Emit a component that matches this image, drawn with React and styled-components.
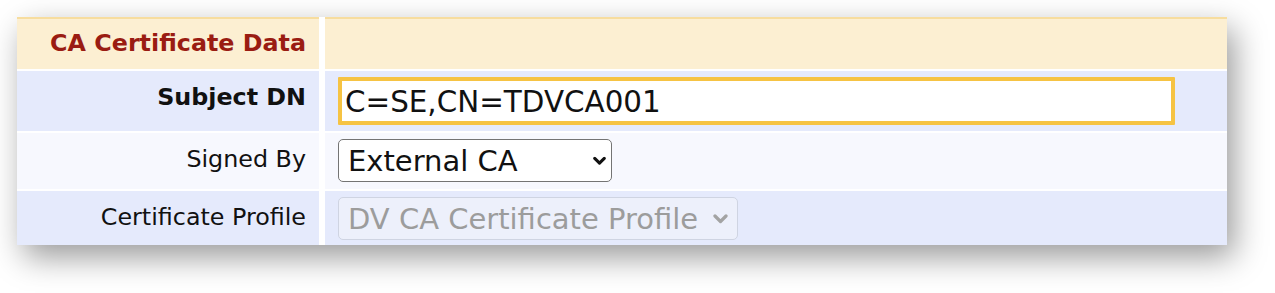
import React from "react";
import styled, { createGlobalStyle } from "styled-components";

const GlobalStyle = createGlobalStyle`
  html, body {
    margin: 0;
    padding: 0;
    background: #ffffff;
  }
  body {
    font-family: "DejaVu Sans", Verdana, sans-serif;
  }
`;

const Page = styled.div`
  padding: 17px 48px 48px 17px;
  width: 1275px;
  height: 293px;
  box-sizing: border-box;
`;

const Panel = styled.div`
  display: grid;
  grid-template-columns: 302px 1fr;
  grid-template-rows: 52px 60px 56px 54px;
  column-gap: 6px;
  row-gap: 2px;
  width: 1210px;
  background: #ffffff;
  box-shadow: 7px 12px 30px rgba(0, 0, 0, 0.4);
`;

const bgFor = (tone) =>
  tone === "head" ? "#fcefd2" : tone === "light" ? "#f7f8fe" : "#e5eafc";

const LabelCell = styled.div`
  background: ${(p) => bgFor(p.$tone)};
  border-top: ${(p) => (p.$tone === "head" ? "2px solid #f7dd9f" : "none")};
  text-align: right;
  padding: ${(p) => (p.$tone === "head" ? "10px" : "12px")} 13px 0 0;
  font-size: 23.8px;
  line-height: 28px;
  font-weight: ${(p) => (p.$strong ? 700 : 400)};
  color: ${(p) => (p.$tone === "head" ? "#9a1c12" : "#111111")};
  white-space: nowrap;
`;

const FieldCell = styled.div`
  background: ${(p) => bgFor(p.$tone)};
  border-top: ${(p) => (p.$tone === "head" ? "2px solid #f7dd9f" : "none")};
  padding: 6px 0 0 13px;
  display: flex;
  align-items: flex-start;
`;

const TextInput = styled.input`
  box-sizing: border-box;
  width: 837px;
  height: 48px;
  border: 4px solid #f6c343;
  border-radius: 1px;
  background: #ffffff;
  padding: 2px 0 0 3px;
  font-family: "DejaVu Sans", Verdana, sans-serif;
  font-size: 29.4px;
  color: #111111;
  outline: none;
`;

const SelectWrap = styled.div`
  position: relative;
  width: ${(p) => p.$width}px;
  height: 43px;
`;

const Select = styled.select`
  appearance: none;
  -webkit-appearance: none;
  box-sizing: border-box;
  width: 100%;
  height: 100%;
  margin: 0;
  border: 1px solid ${(p) => (p.disabled ? "#cfd4e2" : "#747474")};
  border-radius: 5px;
  background: ${(p) => (p.disabled ? "#edf0fb" : "#ffffff")};
  color: ${(p) => (p.disabled ? "#9c9c9c" : "#111111")};
  padding: 0 0 0 9px;
  font-family: "DejaVu Sans", Verdana, sans-serif;
  font-size: 29px;
  outline: none;
  opacity: 1;
`;

const Chevron = styled.svg`
  position: absolute;
  right: ${(p) => p.$right}px;
  top: 50%;
  transform: translateY(-50%);
  pointer-events: none;
`;

function Arrow({ right, color, w, h, sw }) {
  return (
    <Chevron $right={right} width={w} height={h} viewBox="0 0 12 8">
      <path
        d="M1.6 1.6 L6 6 L10.4 1.6"
        fill="none"
        stroke={color}
        strokeWidth={sw}
        strokeLinecap="round"
        strokeLinejoin="round"
      />
    </Chevron>
  );
}

export default function App() {
  return (
    <>
      <GlobalStyle />
      <Page>
        <Panel>
          <LabelCell $tone="head" $strong>
            CA Certificate Data
          </LabelCell>
          <FieldCell $tone="head" />

          <LabelCell $tone="blue" $strong>
            Subject DN
          </LabelCell>
          <FieldCell $tone="blue">
            <TextInput defaultValue="C=SE,CN=TDVCA001" />
          </FieldCell>

          <LabelCell $tone="light">Signed By</LabelCell>
          <FieldCell $tone="light">
            <SelectWrap $width={274}>
              <Select defaultValue="ext">
                <option value="ext">External CA</option>
              </Select>
              <Arrow right={6} color="#111111" w={13} h={9} sw={2.8} />
            </SelectWrap>
          </FieldCell>

          <LabelCell $tone="blue">Certificate Profile</LabelCell>
          <FieldCell $tone="blue">
            <SelectWrap $width={400}>
              <Select disabled defaultValue="dv">
                <option value="dv">DV CA Certificate Profile</option>
              </Select>
              <Arrow right={10} color="#a3a3a3" w={15} h={10} sw={2.6} />
            </SelectWrap>
          </FieldCell>
        </Panel>
      </Page>
    </>
  );
}
